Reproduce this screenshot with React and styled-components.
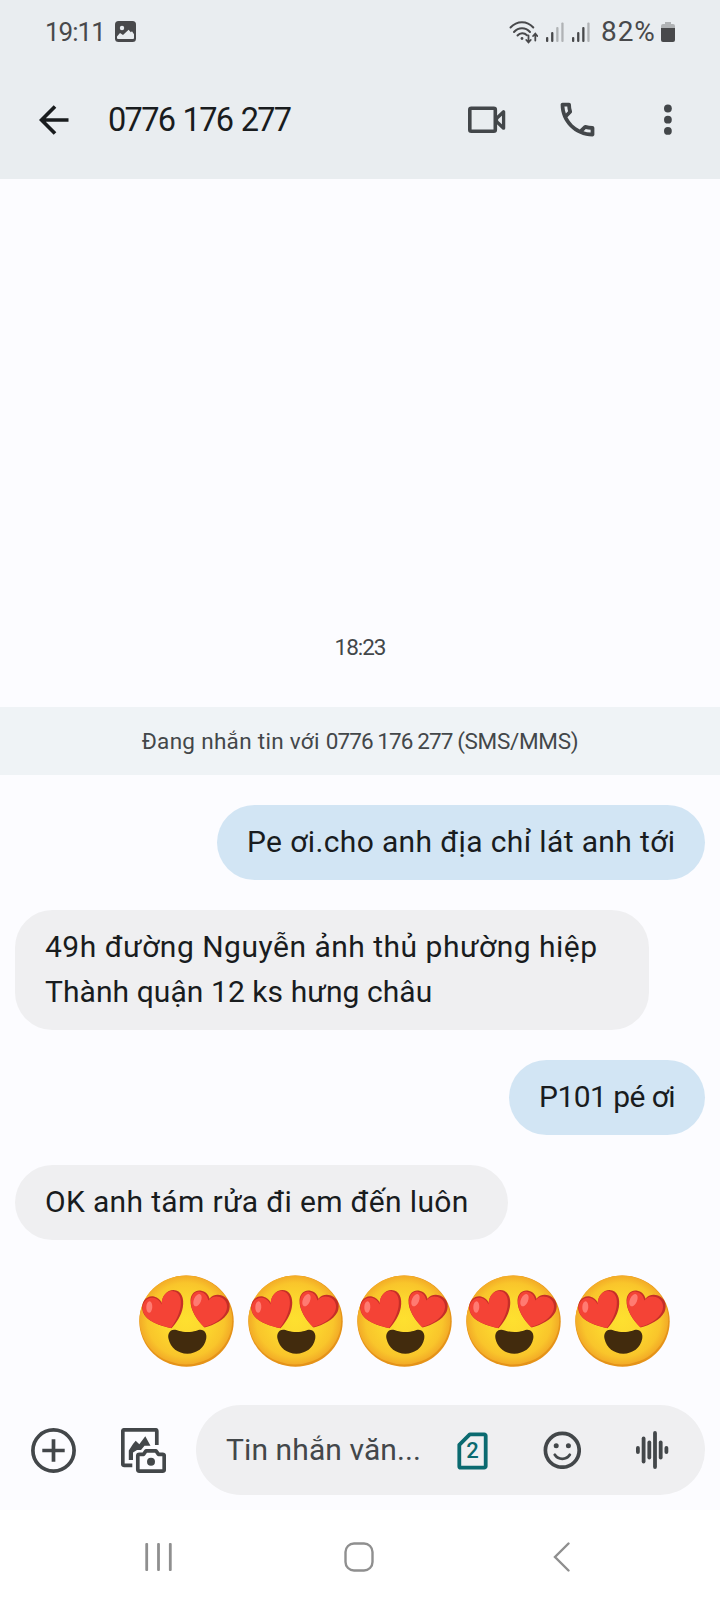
import React, { Fragment } from 'react';
import styled, { createGlobalStyle, ThemeProvider } from 'styled-components';

const theme = {
  headerBg: '#e9edf0',
  pageBg: '#fcfcff',
  bannerBg: '#eff3f6',
  sentBg: '#d2e5f4',
  receivedBg: '#efeff1',
  ink: '#191c1e',
  iconColor: '#43474a',
  status: '#48494b',
  faded: '#b0b3b5',
  accent: '#0b6a70',
  nav: '#8f8f8f'
};

const GlobalStyle = createGlobalStyle`
  * {
    box-sizing: border-box;
  }
  body {
    margin: 0;
    font-family: Roboto, 'Noto Sans', sans-serif;
  }
  svg {
    display: block;
    flex: none;
  }
`;

const Screen = styled.div`
  display: flex;
  flex-direction: column;
  width: 720px;
  height: 1600px;
  overflow: hidden;
  background: ${props => props.theme.pageBg};
  color: ${props => props.theme.ink};
`;

const Text = styled.span`
  white-space: nowrap;
  letter-spacing: ${props => props.$spacing || 0}px;
`;

const Header = styled.header`
  flex: none;
  height: 179px;
  background: ${props => props.theme.headerBg};
`;

const StatusBar = styled.div`
  display: flex;
  align-items: center;
  justify-content: space-between;
  height: 63px;
  padding: 0 45px;
  font-size: 26px;
  color: ${props => props.theme.status};
`;

const StatusGroup = styled.div`
  display: flex;
  align-items: center;
  gap: ${props => props.$gap}px;
`;

const Percent = styled(Text)`
  width: 52px;
  margin-left: 3px;
  font-size: 28px;
`;

const AppBar = styled.div`
  display: flex;
  align-items: center;
  height: 113px;
  padding: 0 48px 0 39px;
  color: ${props => props.theme.iconColor};
`;

const Title = styled.h1`
  flex: 1;
  margin: 0 0 0 39px;
  font-size: 32.5px;
  font-weight: 400;
  white-space: nowrap;
  letter-spacing: -1.7px;
  word-spacing: 2px;
  color: ${props => props.theme.ink};
`;

const Actions = styled.div`
  display: flex;
  align-items: center;
  gap: 49px;
  margin-right: 64px;
`;

const Feed = styled.main`
  flex: 1;
  display: flex;
  flex-direction: column;
  justify-content: flex-end;
  padding-bottom: 38px;
`;

const TimeLabel = styled.div`
  margin-bottom: 47px;
  font-size: 22.5px;
  line-height: 26px;
  text-align: center;
  color: ${props => props.theme.iconColor};
`;

const Banner = styled.div`
  height: 68px;
  font-size: 22.5px;
  line-height: 68px;
  text-align: center;
  background: ${props => props.theme.bannerBg};
  color: ${props => props.theme.iconColor};
`;

const Messages = styled.div`
  display: flex;
  flex-direction: column;
  align-items: flex-start;
  gap: 30px;
  padding: 30px 15px 35px;
`;

const Bubble = styled.div`
  width: ${props => props.$width}px;
  padding: 14px 0 16px 30px;
  border-radius: 37.5px;
  font-size: 30px;
  line-height: 45px;
  align-self: ${props => (props.$sent ? 'flex-end' : 'flex-start')};
  background: ${props =>
    props.$sent ? props.theme.sentBg : props.theme.receivedBg};
`;

const EmojiRow = styled.div`
  display: flex;
  justify-content: flex-end;
  gap: 14px;
  padding-right: 50px;
`;

const Composer = styled.div`
  flex: none;
  display: flex;
  align-items: center;
  height: 105px;
  padding: 0 15px 15px 31px;
  color: ${props => props.theme.iconColor};
`;

const AttachButtons = styled.div`
  display: flex;
  gap: 45px;
  width: 165px;
`;

const InputPill = styled.div`
  flex: 1;
  display: flex;
  align-items: center;
  height: 90px;
  padding: 0 36px 0 30px;
  border-radius: 45px;
  background: ${props => props.theme.receivedBg};
`;

const Placeholder = styled(Text)`
  flex: 1;
  padding-bottom: 2px;
  font-size: 30px;
`;

const InputIcons = styled.div`
  display: flex;
  align-items: center;
  gap: 55px;
`;

const NavBar = styled.nav`
  flex: none;
  display: flex;
  align-items: center;
  justify-content: space-between;
  height: 90px;
  padding: 4px 150px 0 145px;
  background: #fff;
  color: ${props => props.theme.nav};
`;

const HomeButton = styled.div`
  padding-right: 8px;
`;

const PictureIcon = () => (
  <svg width="21" height="21" viewBox="0 0 21 21">
    <rect width="21" height="21" rx="3.5" fill="currentColor" />
    <circle cx="7" cy="7" r="2.2" fill={theme.headerBg} />
    <path
      d="M2 15.5 5 12l3 2 5.6-5.2 2.2 2.4 1.2-1 2 3V17a1 1 0 0 1-1 1H3a1 1 0 0 1-1-1z"
      fill={theme.headerBg}
    />
  </svg>
);

const WifiIcon = () => (
  <svg
    width="30"
    height="24"
    viewBox="0 0 30 24"
    fill="none"
    stroke="currentColor"
    strokeWidth="2"
    strokeLinecap="round"
  >
    <path d="M2.5 7.5C9 .4 19 .4 25.3 7.5M6 12c4.5-5 11.5-5 16 0M9.5 15.5c2.5-3 6.8-3 9.5-.3" />
    <circle cx="14" cy="18.5" r="1.4" fill="currentColor" stroke="none" />
    <path
      d="M20.5 15.5V22M18.3 20l2.2 2.4 2.2-2.4M27.3 20.5V14M25.1 16l2.2-2.4 2 2.4"
      strokeWidth="1.8"
    />
  </svg>
);

const SignalIcon = ({ bars }) => (
  <svg width="18" height="20" viewBox="0 0 18 20">
    {[5, 10, 15, 19.5].map((height, index) => (
      <rect
        key={index}
        x={index * 5.1}
        y={20 - height}
        width="2.3"
        height={height}
        rx="1"
        fill={index < bars ? theme.status : theme.faded}
      />
    ))}
  </svg>
);

const BatteryIcon = () => (
  <svg width="14" height="20" viewBox="0 0 14 20">
    <path d="M4 0h6v2h2a2 2 0 0 1 2 2v3H0V4a2 2 0 0 1 2-2h2z" fill={theme.faded} />
    <path d="M0 6h14v12a2 2 0 0 1-2 2H2a2 2 0 0 1-2-2z" fill="currentColor" />
  </svg>
);

const BackIcon = () => (
  <svg
    width="30"
    height="30"
    viewBox="0 0 30 30"
    fill="none"
    stroke={theme.ink}
    strokeWidth="3.7"
  >
    <path d="M29.5 15H3M16 1.5 2.5 15 16 28.5" />
  </svg>
);

const VideoIcon = () => (
  <svg
    width="39"
    height="28"
    viewBox="0 0 39 28"
    fill="none"
    stroke="currentColor"
    strokeWidth="3.6"
    strokeLinejoin="round"
  >
    <rect x="2.8" y="2.3" width="25.5" height="23" rx="1.5" />
    <path d="M29.5 12.5 36.6 5.8v16.4l-7.1-6.7z" strokeWidth="3.3" />
  </svg>
);

const PhoneIcon = () => (
  <svg width="45" height="45" viewBox="0 0 24 24" fill="currentColor">
    <path d="M6.54 5c.06.89.21 1.76.45 2.59l-1.2 1.2c-.41-1.2-.67-2.47-.76-3.79h1.51m9.86 12.02c.85.24 1.72.39 2.6.45v1.49c-1.32-.09-2.59-.35-3.8-.75l1.2-1.19M7.5 3H4c-.55 0-1 .45-1 1 0 9.39 7.61 17 17 17 .55 0 1-.45 1-1v-3.49c0-.55-.45-1-1-1-1.24 0-2.45-.2-3.57-.57-.1-.04-.21-.05-.31-.05-.26 0-.51.1-.71.29l-2.2 2.2c-2.83-1.45-5.15-3.76-6.59-6.59l2.2-2.2c.28-.28.36-.67.25-1.02C8.7 6.45 8.5 5.25 8.5 4c0-.55-.45-1-1-1z" />
  </svg>
);

const MoreIcon = () => (
  <svg width="8" height="32" viewBox="0 0 8 32" fill="currentColor">
    <circle cx="3.9" cy="4.5" r="3.9" />
    <circle cx="3.9" cy="15.7" r="3.9" />
    <circle cx="3.9" cy="26.9" r="3.9" />
  </svg>
);

const HeartEyes = () => (
  <svg width="95" height="92" viewBox="0 0 95 92">
    <defs>
      <radialGradient id="face" cx="50%" cy="50%" r="52%">
        <stop offset="0" stopColor="#fee02f" />
        <stop offset="0.45" stopColor="#fcd72e" />
        <stop offset="0.8" stopColor="#f9c52b" />
        <stop offset="1" stopColor="#f1a526" />
      </radialGradient>
    </defs>
    <ellipse cx="47.5" cy="46.2" rx="47.2" ry="45.6" fill="#e59318" />
    <ellipse cx="46.9" cy="45" rx="46.4" ry="44.5" fill="url(#face)" />
    <path
      d="M32.5 53.3C21 50.5 7 46.5 3.8 36.5 1 27 8 20 15 21.5c4 .8 6.500 3.500 7.800 6.500C23 21 28 15 34.500 15c8 .2 11 8.500 9.300 17.500-1.400 8-6.500 15.500-11.300 20.800z"
      fill="#c52f27"
    />
    <path
      d="M32 53C21 50.5 7.500 46.500 4.200 37 1.500 28 8 22 14 22.700c4 .5 7 3.300 8.500 6.800C22.500 22 27 16 33 16c7.500.2 10 7.500 8.500 16C40 40 36 47.500 32 53z"
      fill="#f44336"
    />
    <path
      d="M65.5 52.5C58 45 51 35 51.500 25c.5-6.500 5-10.300 10-9.500 5 .7 8 4 9 8.200 2.500-3.500 7.500-5 12.500-3.200 7 2.500 9.500 9.500 6.500 16.500C85.500 45 75 50 65.500 52.500z"
      fill="#c52f27"
    />
    <path
      d="M65 52C58 45 51.500 35 52 26c.5-6.500 4.500-10 9-9.300 5 .8 7.500 4.500 8.300 8.800 3-3.500 7-5 11.500-3.500 7 2.500 8.800 9 6 15C83 45 74 49.500 65 52z"
      fill="#f44336"
    />
    <ellipse cx="10.3" cy="32" rx="3" ry="5.8" fill="#ff7b72" transform="rotate(3 10 32)" />
    <ellipse cx="58.5" cy="25" rx="3.6" ry="6.5" fill="#ff7b72" transform="rotate(24 58 25)" />
    <path
      d="M35 54.800c-4.500.2-6.500 4.500-5.500 9C31.500 73 39 78.700 48.300 78.700S65.500 73 67.200 63.800c1-5-1.500-9-5.700-9-2.500 0-6 2.300-13 2.300s-11-2.500-13.500-2.300z"
      fill="#422b0d"
    />
  </svg>
);

const PlusIcon = () => (
  <svg
    width="45"
    height="45"
    viewBox="0 0 45 45"
    fill="none"
    stroke="currentColor"
    strokeWidth="3.7"
  >
    <circle cx="22.5" cy="22.5" r="20.6" />
    <path d="M22.5 11.3v22.4M11.3 22.5h22.4" />
  </svg>
);

const GalleryIcon = () => (
  <svg
    width="45"
    height="45"
    viewBox="0 0 45 45"
    fill="none"
    stroke="currentColor"
    strokeWidth="3.7"
    strokeLinejoin="round"
  >
    <path d="M11.3 37.3h-8a1.500 1.500 0 0 1-1.500-1.500V3.300a1.500 1.500 0 0 1 1.500-1.500h31a1.500 1.500 0 0 1 1.500 1.500V17" />
    <path
      d="M7.8 32V22.500l4.200-6.500 2.700-3.200 3.600 3.500 6-8 5.200 9.400h-6l-3.500 4.300h-4L12 24.500V32z"
      fill="currentColor"
      stroke="none"
    />
    <path d="M18.3 26.3h4.200l2.500-3.400h10l2.500 3.400h4.200a1.500 1.500 0 0 1 1.500 1.500v13.800a1.500 1.500 0 0 1-1.500 1.500H18.300a1.500 1.500 0 0 1-1.500-1.500V27.800a1.500 1.500 0 0 1 1.500-1.500z" />
    <circle cx="30" cy="33.8" r="4" fill="currentColor" stroke="none" />
  </svg>
);

const SimBadge = styled.div`
  display: grid;
  place-items: center;
  width: 31px;
  height: 38px;
  font-size: 22px;
  line-height: 40px;
  font-weight: 500;
  color: ${props => props.theme.accent};

  > * {
    grid-area: 1 / 1;
  }
`;

const SimIcon = () => (
  <SimBadge>
    <svg width="31" height="38" viewBox="0 0 31 38" fill="none">
      <path
        d="M12.8 2.3h14.400a1.500 1.500 0 0 1 1.500 1.500v30.400a1.500 1.500 0 0 1-1.500 1.500H3.800a1.500 1.500 0 0 1-1.500-1.500V12.800z"
        stroke="currentColor"
        strokeWidth="3.8"
        strokeLinejoin="round"
      />
    </svg>
    <span>2</span>
  </SimBadge>
);

const SmileIcon = () => (
  <svg width="38" height="38" viewBox="0 0 38 38" fill="none">
    <circle cx="19.3" cy="19.3" r="16.9" stroke="currentColor" strokeWidth="3.7" />
    <circle cx="13.2" cy="14.8" r="2.5" fill="currentColor" />
    <circle cx="25.4" cy="14.8" r="2.5" fill="currentColor" />
    <path
      d="M11.8 23.8c3.5 5.300 11.500 5.300 15 0"
      stroke="currentColor"
      strokeWidth="2.8"
      strokeLinecap="round"
    />
  </svg>
);

const VoiceIcon = () => (
  <svg width="33" height="38" viewBox="0 0 33 38" fill="currentColor">
    {[8, 27, 19, 38, 19, 8].map((height, index) => (
      <rect
        key={index}
        x={index * 5.7}
        y={19 - height / 2}
        width="3.8"
        height={height}
        rx="1.9"
      />
    ))}
  </svg>
);

const RecentsIcon = () => (
  <svg width="28" height="28" viewBox="0 0 28 28" fill="currentColor">
    <rect x="0.3" width="2.8" height="28" rx="1" />
    <rect x="12.1" width="2.8" height="28" rx="1" />
    <rect x="23.9" width="2.8" height="28" rx="1" />
  </svg>
);

const HomeIcon = () => (
  <svg width="30" height="30" viewBox="0 0 30 30" fill="none">
    <rect
      x="1.5"
      y="1.5"
      width="27"
      height="27"
      rx="8.5"
      stroke="currentColor"
      strokeWidth="2.4"
    />
  </svg>
);

const NavBackIcon = () => (
  <svg width="17" height="30" viewBox="0 0 17 30" fill="none">
    <path
      d="M15.5 1.5 2 15l13.5 13.5"
      stroke="currentColor"
      strokeWidth="2.4"
      strokeLinecap="round"
    />
  </svg>
);

const messages = [
  {
    sent: true,
    width: 488,
    lines: [{ text: 'Pe ơi.cho anh địa chỉ lát anh tới', spacing: 0.37 }]
  },
  {
    sent: false,
    width: 634,
    lines: [
      { text: '49h đường Nguyễn ảnh thủ phường hiệp', spacing: 0.5 },
      { text: 'Thành quận 12 ks hưng châu', spacing: 0.07 }
    ]
  },
  {
    sent: true,
    width: 196,
    lines: [{ text: 'P101 pé ơi', spacing: -0.55 }]
  },
  {
    sent: false,
    width: 493,
    lines: [{ text: 'OK anh tám rửa đi em đến luôn', spacing: 0.34 }]
  }
];

const App = () => (
  <ThemeProvider theme={theme}>
    <GlobalStyle />
    <Screen>
      <Header>
        <StatusBar>
          <StatusGroup $gap={10}>
            <Text $spacing={-1}>19:11</Text>
            <PictureIcon />
          </StatusGroup>
          <StatusGroup $gap={8}>
            <WifiIcon />
            <SignalIcon bars={2} />
            <SignalIcon bars={3} />
            <Percent $spacing={0.9}>82%</Percent>
            <BatteryIcon />
          </StatusGroup>
        </StatusBar>
        <AppBar>
          <BackIcon />
          <Title>0776 176 277</Title>
          <Actions>
            <VideoIcon />
            <PhoneIcon />
          </Actions>
          <MoreIcon />
        </AppBar>
      </Header>
      <Feed>
        <TimeLabel>
          <Text $spacing={-1}>18:23</Text>
        </TimeLabel>
        <Banner>
          <Text $spacing={0.3}>Đang nhắn tin với </Text>
          <Text $spacing={-0.9}>0776 176 277 </Text>
          <Text $spacing={-0.3}>(SMS/MMS)</Text>
        </Banner>
        <Messages>
          {messages.map((message, index) => (
            <Bubble key={index} $sent={message.sent} $width={message.width}>
              {message.lines.map((line, i) => (
                <Fragment key={line.text}>
                  {i > 0 && <br />}
                  <Text $spacing={line.spacing}>{line.text}</Text>
                </Fragment>
              ))}
            </Bubble>
          ))}
        </Messages>
        <EmojiRow>
          {[...Array(5)].map((_, index) => (
            <HeartEyes key={index} />
          ))}
        </EmojiRow>
      </Feed>
      <Composer>
        <AttachButtons>
          <PlusIcon />
          <GalleryIcon />
        </AttachButtons>
        <InputPill>
          <Placeholder $spacing={0.1}>Tin nhắn văn...</Placeholder>
          <InputIcons>
            <SimIcon />
            <SmileIcon />
            <VoiceIcon />
          </InputIcons>
        </InputPill>
      </Composer>
      <NavBar>
        <RecentsIcon />
        <HomeButton>
          <HomeIcon />
        </HomeButton>
        <NavBackIcon />
      </NavBar>
    </Screen>
  </ThemeProvider>
);

export default App;
